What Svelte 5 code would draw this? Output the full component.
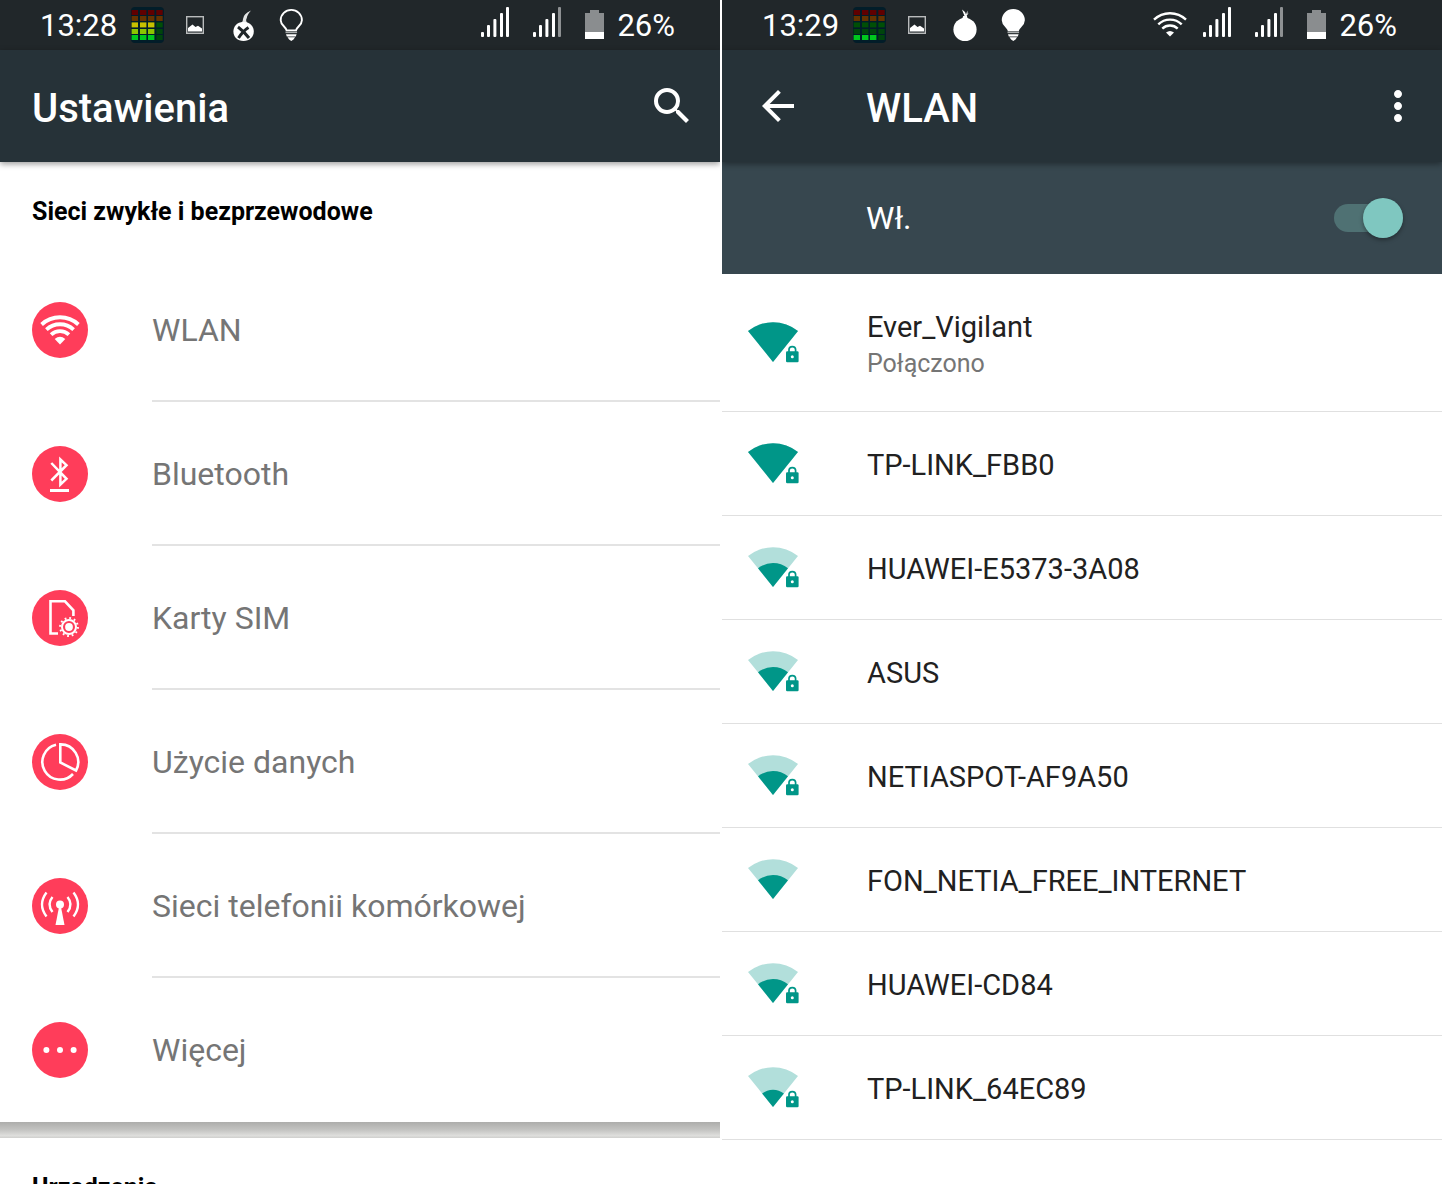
<script>
  const settings = [
    { label: 'WLAN', icon: 'wlan' },
    { label: 'Bluetooth', icon: 'bluetooth' },
    { label: 'Karty SIM', icon: 'sim' },
    { label: 'Użycie danych', icon: 'data' },
    { label: 'Sieci telefonii komórkowej', icon: 'cell' },
    { label: 'Więcej', icon: 'more' }
  ];

  const networks = [
    { name: 'Ever_Vigilant', status: 'Połączono', level: 'full', locked: true },
    { name: 'TP-LINK_FBB0', level: 'full', locked: true },
    { name: 'HUAWEI-E5373-3A08', level: 'medium', locked: true },
    { name: 'ASUS', level: 'medium', locked: true },
    { name: 'NETIASPOT-AF9A50', level: 'medium', locked: true },
    { name: 'FON_NETIA_FREE_INTERNET', level: 'medium', locked: false },
    { name: 'HUAWEI-CD84', level: 'medium', locked: true },
    { name: 'TP-LINK_64EC89', level: 'low', locked: true }
  ];

  const fans = {
    full: 'M25 40L0 9A40 40 0 0 1 50 9Z',
    medium: 'M25 40L10 21.3A24 24 0 0 1 40 21.3Z',
    low: 'M25 40L14.1 26.5A17.3 17.3 0 0 1 35.9 26.5Z'
  };

  const red = '#600000';
  const brown = '#663300';
  const dark = '#004f06';
  const busyMeter = [
    [red, red, red, red],
    [brown, brown, brown, brown],
    ['#c8c000', '#c8c000', '#c8c000', dark],
    ['#8cc400', '#8cc400', '#8cc400', '#00450c'],
    ['#00c81e', '#00c81e', '#00c81e', '#00450c']
  ];
  const idleMeter = [
    [red, red, red, red],
    [brown, brown, brown, brown],
    [dark, dark, dark, dark],
    ['#00450c', '#00450c', '#00450c', '#00450c'],
    ['#00c81e', '#00c81e', '#00c81e', '#00450c']
  ];
  const meterX = [8.6, 17, 25, 33.3];
  const meterY = [10, 16, 22.4, 29, 35];

  const bars = [
    [12, 32],
    [18, 25],
    [24.4, 19],
    [31, 13],
    [37, 7]
  ];

  let wifiOn = $state(true);
</script>

{#snippet signal(dimLast)}
  <svg class="slot-signal" viewBox="0 0 52 50" aria-hidden="true">
    {#each bars as [x, y], i}
      <rect {x} {y} width="3" height={37 - y} rx="1" fill={dimLast && i === 4 ? '#8e9193' : '#fff'} />
    {/each}
  </svg>
{/snippet}

{#snippet statusBar(time, meter, active)}
  <div class="status">
    <span class="clock">{time}</span>
    <svg class="slot" viewBox="0 0 48 50" aria-hidden="true">
      <rect x="8" y="7" width="33" height="36" rx="4" fill="#021d29" />
      {#each meter as row, r}
        {#each row as color, c}
          <rect x={meterX[c]} y={meterY[r]} width="6.4" height="5" fill={color} />
        {/each}
      {/each}
    </svg>
    <svg class="slot" viewBox="0 0 48 50" aria-hidden="true">
      <rect x="15.7" y="16.7" width="16.6" height="16.6" fill="none" stroke="#b9bbbc" stroke-width="1.4" />
      <path d="M17 31.5V28L21.5 24.5L24.5 27L27 25.8L31 28.5V31.5Z" fill="#fff" />
    </svg>
    <svg class="slot" viewBox="0 0 48 50" aria-hidden="true">
      {#if active}
        <circle cx="24" cy="29.5" r="11.6" fill="#fff" />
        <path d="M19.5 19.5Q22 18.5 22.2 16H26Q26 18.5 29 19.5Z" fill="#fff" />
        <path d="M23.5 16L21 9.5L24 12L25 14.5L26.5 10.5V14L28 12.5L25.5 16Z" fill="#fff" />
      {:else}
        <path d="M20.5 23.5Q24 22.5 24 19Q24.500 13.5 32 10.5Q28 15 27.8 18Q26 21 29 23.5Z" fill="#e4e5e5" />
        <path d="M24.5 22C31.5 22 34.8 27 34.8 31.5C34.8 37 30.5 41 24.5 41S14.4 37 14.4 31.5C14.4 27 17.5 22 24.5 22Z" fill="#fff" />
        <path d="M19 27Q24.5 31 30 38M29.5 27.5Q24 31 19.5 38" fill="none" stroke="#21272a" stroke-width="3" />
      {/if}
    </svg>
    <svg class="slot" viewBox="0 0 48 50" aria-hidden="true">
      <path
        d="M19.6 30.4C19.2 26.8 13.7 25.5 13.7 20.2A10.6 10.3 0 0 1 34.9 20.2C34.9 25.5 29.4 26.8 29 30.4Z"
        fill={active ? '#fff' : 'none'} stroke="#fff" stroke-width="1.9" />
      <path d="M18.5 32.4H30.1" stroke="#a9acad" stroke-width="1.5" />
      <path d="M19 34.2H29.6L28.8 36.5H19.8ZM20.5 37.3H28.1L26.5 39.5L24.3 41L22.1 39.5Z" fill="#fff" />
    </svg>
    <span class="spacer"></span>
    {#if active}
      <svg class="slot-wifi" viewBox="0 0 42 50" aria-hidden="true">
        <g fill="none" stroke="#fff" stroke-width="2.4">
          <path d="M5 19.7A23 23 0 0 1 37 19.7" />
          <path d="M9.3 24.4A16.7 16.7 0 0 1 32.7 24.4" />
          <path d="M13.3 28.6A11 11 0 0 1 28.7 28.6" />
        </g>
        <path d="M21 36.5L17 32.5Q21 29.5 25 32.5Z" fill="#fff" />
      </svg>
    {/if}
    {@render signal(false)}
    {@render signal(true)}
    <svg class="slot-battery" viewBox="0 0 44 50" aria-hidden="true">
      <path d="M12 13H17V10H26V13H31V32H12Z" fill="#8a8d8f" />
      <rect x="12" y="32" width="19" height="7" fill="#fff" />
    </svg>
    <span class="percent">26%</span>
  </div>
{/snippet}

<main>
  <section class="phone" aria-label="Ustawienia">
    {@render statusBar('13:28', busyMeter, false)}
    <header class="appbar">
      <h1>Ustawienia</h1>
      <button class="icon-button" aria-label="Szukaj">
        <svg viewBox="0 0 24 24">
          <path d="M15.5 14h-.79l-.28-.27A6.47 6.47 0 0 0 16 9.5 6.5 6.5 0 1 0 9.5 16c1.61 0 3.09-.59 4.23-1.57l.27.28v.79l5 4.99L20.49 19l-4.99-5zm-6 0C7.01 14 5 11.99 5 9.5S7.01 5 9.5 5 14 7.01 14 9.5 11.99 14 9.5 14z" />
        </svg>
      </button>
    </header>

    <h2>Sieci zwykłe i bezprzewodowe</h2>
    <ul class="settings">
      {#each settings as item}
        <li>
          <a href="#{item.icon}">
            <svg class="badge" viewBox="0 0 56 56" aria-hidden="true">
              <circle cx="28" cy="28" r="28" fill="#ff3d5a" />
              {#if item.icon === 'wlan'}
                <g fill="none" stroke="#fff" stroke-width="3.8">
                  <path d="M9.6 22.500A27 27 0 0 1 46.4 22.500" />
                  <path d="M14.4 27.6A20 20 0 0 1 41.6 27.6" />
                  <path d="M19.1 32.7A13 13 0 0 1 36.9 32.7" />
                </g>
                <path d="M28 42.5L22.7 37Q28 32.5 33.3 37Z" fill="#fff" />
              {:else if item.icon === 'bluetooth'}
                <path d="M19.3 17L34.5 32.8L28.4 38.5V13.5L34.5 19.2L19.3 34.5" fill="none" stroke="#fff" stroke-width="2.5" />
                <path d="M18 43H37V46H18Z" fill="#fff" />
              {:else if item.icon === 'sim'}
                <path d="M26 43.5H18.5V11.3H33L41.4 20.3V26" fill="none" stroke="#fff" stroke-width="2.6" />
                <circle cx="37" cy="37" r="7" fill="none" stroke="#fff" stroke-width="2" />
                <circle cx="37" cy="37" r="8.9" fill="none" stroke="#fff" stroke-width="2" stroke-dasharray="1.8 2.86" />
                <circle cx="37" cy="37" r="3.9" fill="#fff" />
              {:else if item.icon === 'data'}
                <g fill="none" stroke="#fff" stroke-width="2.6">
                  <path d="M24 10.7A17.7 17.7 0 1 0 41 40" />
                  <path d="M28.3 28.5V10.4A17.6 17.6 0 0 1 44 36.5Z" />
                </g>
              {:else if item.icon === 'cell'}
                <circle cx="28" cy="26.5" r="4" fill="#fff" />
                <path d="M27 29H29L32.5 47H23.5Z" fill="#fff" />
                <g fill="none" stroke="#fff" stroke-width="2.4">
                  <path d="M35.5 19Q41.5 26.3 35.5 34" />
                  <path d="M20.5 19Q14.5 26.3 20.5 34" />
                  <path d="M41.5 14.5Q50.5 26.5 41.5 38.5" />
                  <path d="M14.5 14.5Q5.5 26.5 14.5 38.5" />
                </g>
              {:else}
                <g fill="#fff">
                  <circle cx="14.4" cy="28" r="3" />
                  <circle cx="28" cy="28" r="3" />
                  <circle cx="41.6" cy="28" r="3" />
                </g>
              {/if}
            </svg>
            <span>{item.label}</span>
          </a>
        </li>
      {/each}
    </ul>
    <div class="divider"></div>
    <h2>Urządzenia</h2>
  </section>

  <section class="phone" aria-label="WLAN">
    {@render statusBar('13:29', idleMeter, true)}
    <header class="appbar with-back">
      <button class="icon-button" aria-label="Wstecz">
        <svg viewBox="0 0 24 24">
          <path d="M20 11H7.83l5.59-5.59L12 4l-8 8 8 8 1.41-1.41L7.83 13H20v-2z" />
        </svg>
      </button>
      <h1>WLAN</h1>
      <button class="icon-button" aria-label="Więcej opcji">
        <svg viewBox="0 0 24 24">
          <path d="M12 8c1.1 0 2-.9 2-2s-.9-2-2-2-2 .9-2 2 .9 2 2 2zm0 2c-1.1 0-2 .9-2 2s.9 2 2 2 2-.9 2-2-.9-2-2-2zm0 6c-1.1 0-2 .9-2 2s.9 2 2 2 2-.9 2-2-.9-2-2-2z" />
        </svg>
      </button>
    </header>

    <label class="toggle">
      <span>Wł.</span>
      <input type="checkbox" role="switch" bind:checked={wifiOn} />
    </label>

    <ul class="networks">
      {#each networks as net}
        <li>
          <button class="network" class:connected={net.status}>
            <svg class="strength" viewBox="0 0 52 41" aria-hidden="true">
              <path d={fans.full} fill="#b2dfdb" />
              <path d={fans[net.level]} fill="#009688" />
              {#if net.locked}
                <path d="M41 30V27.6A3.3 3 0 0 1 47.6 27.600V30" fill="none" stroke="#009688" stroke-width="1.7" />
                <rect x="38" y="29.3" width="12.6" height="11" rx="1.2" fill="#009688" />
                <circle cx="44.3" cy="34.8" r="1.5" fill="#fff" />
              {/if}
            </svg>
            <span class="text">
              <span class="name">{net.name}</span>
              {#if net.status}<span class="sub">{net.status}</span>{/if}
            </span>
          </button>
        </li>
      {/each}
    </ul>
  </section>
</main>

<style>
  :global(body) {
    background: #fff;
  }

  main {
    display: grid;
    grid-template-columns: 1fr 1fr;
    gap: 2px;
    height: 100vh;
    overflow: hidden;
    font-family: Roboto, 'Liberation Sans', sans-serif;
  }

  .phone {
    min-width: 0;
    overflow: hidden;
  }

  h1,
  h2,
  ul {
    margin: 0;
    padding: 0;
    list-style: none;
  }

  button {
    border: 0;
    padding: 0;
    background: none;
    font: inherit;
    text-align: left;
    cursor: pointer;
  }

  svg {
    display: block;
    flex: none;
  }

  .status {
    display: flex;
    align-items: center;
    height: 50px;
    padding: 0 45px 0 40px;
    background: #21272a;
    color: #fff;
    font-size: 31px;
    line-height: 40px;
  }

  .clock {
    width: 83px;
  }

  .clock,
  .percent {
    padding-top: 2px;
  }

  .slot {
    width: 48px;
    height: 50px;
  }

  .slot-wifi {
    width: 42px;
    height: 50px;
  }

  .slot-signal {
    width: 52px;
    height: 50px;
  }

  .slot-battery {
    width: 44px;
    height: 50px;
  }

  .spacer {
    flex: 1;
  }

  .appbar {
    position: relative;
    z-index: 1;
    display: flex;
    align-items: center;
    height: 112px;
    padding: 0 24px 0 32px;
    background: #263238;
    color: #fff;
    box-shadow: 0 2px 6px rgba(0, 0, 0, 0.4);
  }

  .with-back {
    padding-right: 20px;
  }

  h1 {
    flex: 1;
    padding-top: 6px;
    font-size: 40px;
    font-weight: 500;
    line-height: 48px;
  }

  .with-back h1 {
    padding-left: 64px;
  }

  .icon-button svg {
    width: 48px;
    height: 48px;
    fill: #fff;
  }

  h2 {
    padding: 32px 32px 28px;
    color: #000;
    font-size: 25px;
    font-weight: 700;
    line-height: 36px;
  }

  .settings li {
    height: 144px;
  }

  .settings a {
    display: flex;
    gap: 64px;
    align-items: center;
    height: 100%;
    padding-left: 32px;
    color: #757575;
    font-size: 32px;
    text-decoration: none;
  }

  .settings span {
    display: flex;
    flex: 1;
    align-items: center;
    box-sizing: border-box;
    height: 100%;
    border-top: 2px solid transparent;
    border-bottom: 2px solid #e3e3e3;
  }

  .settings li:last-child span {
    border-bottom-color: transparent;
  }

  .badge {
    width: 56px;
    height: 56px;
  }

  .divider {
    height: 16px;
    background: linear-gradient(#adadab, #c4c4c2 50%, #dededc 85%, #cfcfcd);
  }

  .toggle {
    display: flex;
    align-items: center;
    justify-content: space-between;
    height: 112px;
    padding: 0 39px 0 144px;
    background: #37474f;
    color: #fff;
    font-size: 32px;
  }

  .toggle input {
    position: relative;
    width: 69px;
    height: 28px;
    margin: 0;
    border-radius: 14px;
    background: #4f7173;
    appearance: none;
    cursor: pointer;
  }

  .toggle input::before {
    position: absolute;
    top: -6px;
    left: 0;
    width: 40px;
    height: 40px;
    border-radius: 50%;
    background: #bdbdbd;
    box-shadow: 0 2px 4px rgba(0, 0, 0, 0.35);
    content: '';
  }

  .toggle input:checked::before {
    right: 0;
    left: auto;
    background: #7fc7c0;
  }

  .networks li {
    border-bottom: 1px solid #e0e0e0;
  }

  .network {
    display: flex;
    gap: 67px;
    align-items: center;
    width: 100%;
    height: 103px;
    padding-left: 26px;
    color: #212121;
  }

  .connected {
    height: 137px;
  }

  .strength {
    width: 52px;
    height: 41px;
  }

  .text {
    display: flex;
    flex-direction: column;
    padding-top: 2px;
  }

  .name {
    font-size: 29px;
    line-height: 40px;
  }

  .sub {
    color: #757575;
    font-size: 25px;
    line-height: 34px;
  }
</style>
